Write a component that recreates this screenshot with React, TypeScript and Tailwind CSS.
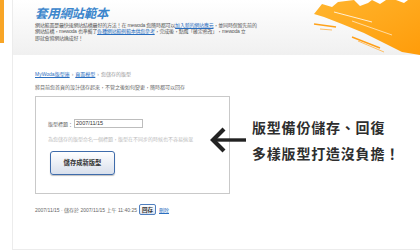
export default function App() {
  return (
    <div className="w-[420px] h-[251px] bg-white overflow-hidden flex font-['Liberation_Sans','Noto_Sans_CJK_TC',sans-serif]">
      <div className="w-[12px] shrink-0">
        <div className="w-[4px] h-[43px] bg-[#f8a526]"></div>
      </div>

      <div className="flex-1 h-[250px] border-l border-b border-[#ececec] flex flex-col">
        <header className="relative h-[55px] shrink-0 bg-gradient-to-b from-white to-[#f0f0f0] pl-[22px] pt-[6px]">
          <Brush />
          <h1 className="relative text-[12.5px] leading-[14px] font-bold italic text-[#3b86cc] font-['Noto_Sans_CJK_TC',sans-serif] tracking-[-0.3px]">
            套用網站範本
          </h1>
          <p className="relative mt-[2px] text-[5px] leading-[6.4px] text-[#555] whitespace-nowrap tracking-[-0.2px]">
            網站範面是最快速網站結構最好的方法！在 mewoda 您隨時都可以
            <span className="text-[#2a6fc0] underline">加入新的網站應元</span>
            ，並同時保留先前的
            <br />
            網站結構，mewoda 也準備了
            <span className="text-[#2a6fc0] underline">各種網站範例範本供您參考</span>
            ，完成後，點選「確定修改」，mewoda 立
            <br />
            即就會將網站換成好！
          </p>
        </header>

        <main className="flex-1 pl-[22px] pt-[16px]">
          <div className="text-[5px] leading-[6px] text-[#999] whitespace-nowrap">
            <span className="text-[#2a6fc0] underline">MyWoda版型庫</span>
            <span className="mx-[2px]">›</span>
            <span className="text-[#2a6fc0] underline">頁面模型</span>
            <span className="mx-[2px]">›</span>
            您儲存的版型
          </div>
          <div className="mt-[7px] text-[5px] leading-[6px] text-[#666] whitespace-nowrap">
            將目前您首頁的設計儲存起來，不管之後如何變更，隨時都可以回存
          </div>

          <div className="mt-[6px] flex items-center">
            <div className="w-[195px] h-[98px] shrink-0 border border-[#c9c9c9] pl-[12px] pt-[22px]">
              <div className="flex items-center gap-[1px]">
                <span className="text-[5px] leading-[6px] text-[#666]">版型標題：</span>
                <div className="w-[69px] h-[9px] border border-[#bdbdbd] bg-white text-[5.5px] leading-[7px] pl-[1px] text-[#333]">
                  2007/11/15
                </div>
              </div>
              <div className="mt-[8px] text-[5px] leading-[6px] text-[#bbb] whitespace-nowrap">
                為您儲存的版型命名一個標題，版型在不同步的時候也不容易搞混
              </div>
              <button className="mt-[9px] ml-[2px] w-[65px] h-[24px] rounded-[3px] border border-[#3f6cab] bg-gradient-to-b from-white to-[#d9e0ec] shadow-[0_1px_1px_rgba(0,0,0,0.25)] text-[6.3px] font-bold text-[#333] flex items-center justify-center">
                儲存成新版型
              </button>
            </div>

            <div className="relative -ml-[20px] -mt-[11px] shrink-0">
              <svg width="36" height="26" viewBox="0 0 36 26" className="block">
                <polyline points="14,2 3,13 14,24" fill="none" stroke="#222" strokeWidth="4.2" />
                <line x1="5" y1="13" x2="36" y2="13" stroke="#222" strokeWidth="3.4" />
              </svg>
            </div>

            <div className="ml-[6px] -mt-[11px] text-[14px] leading-[26px] font-bold text-[#2e2e2e] tracking-[0.8px] whitespace-nowrap font-['Noto_Sans_CJK_TC',sans-serif]">
              版型備份儲存、回復
              <br />
              多樣版型打造沒負擔！
            </div>
          </div>

          <div className="mt-[10px] flex items-center text-[5px] leading-[6px] text-[#666] whitespace-nowrap">
            <span>2007/11/15 · 儲存於 2007/11/15 上午 11:40:25</span>
            <button className="ml-[2px] w-[17px] h-[11px] rounded-[2px] border border-[#4f7fc0] bg-gradient-to-b from-white to-[#dbe3ef] text-[5.5px] font-bold text-[#333] flex items-center justify-center">
              回存
            </button>
            <span className="ml-[3px] text-[#2a6fc0] underline">刪除</span>
          </div>
        </main>
      </div>
    </div>
  );
}

function Brush() {
  return (
    <svg className="absolute right-0 top-0" width="108" height="56" viewBox="0 0 108 56">
      <defs>
        <linearGradient id="og" x1="0" y1="0" x2="1" y2="1">
          <stop offset="0" stopColor="#ffb52e" />
          <stop offset="1" stopColor="#ff9c0a" />
        </linearGradient>
      </defs>
      <polygon
        points="2,14 10,4 20,7 26,2 42,0 48,6 56,3 60,0 108,0 108,55 90,52 70,42 52,33 30,24 12,17"
        fill="url(#og)"
      />
      <polygon points="60,0 68,4 74,0" fill="#fff" />
      <polygon points="84,0 92,3 96,0" fill="#fff" />
      <line x1="22" y1="12" x2="60" y2="22" stroke="#fff" strokeWidth="0.8" />
      <line x1="40" y1="21" x2="80" y2="35" stroke="#fff" strokeWidth="0.6" />
      <line x1="2" y1="24" x2="24" y2="27" stroke="#ffa21a" strokeWidth="1.4" />
      <line x1="8" y1="29" x2="20" y2="30" stroke="#ffb040" strokeWidth="0.8" />
      <line x1="40" y1="37" x2="68" y2="48" stroke="#ff9f18" strokeWidth="1.4" />
      <line x1="46" y1="41" x2="72" y2="52" stroke="#ffb040" strokeWidth="0.8" />
    </svg>
  );
}
